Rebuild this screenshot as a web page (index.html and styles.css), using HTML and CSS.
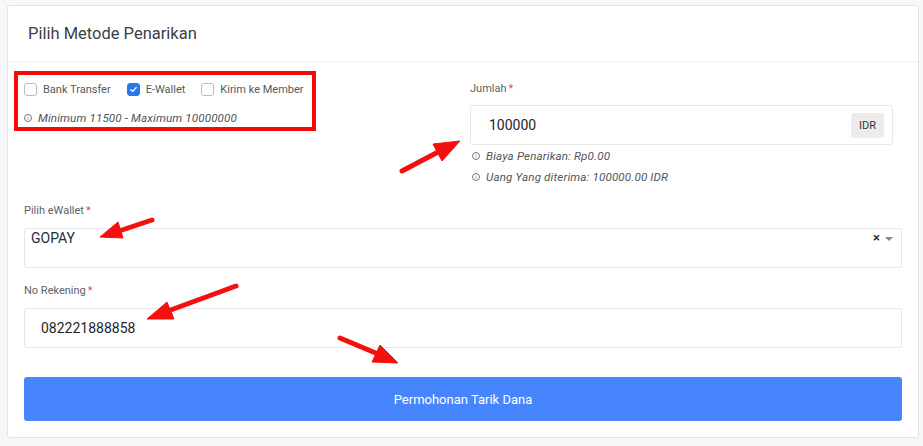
FILE: index.html
```html
<!DOCTYPE html>
<html lang="id">
<head>
<meta charset="utf-8">
<title>Pilih Metode Penarikan</title>
<link rel="stylesheet" href="styles.css">
</head>
<body>
<div class="card">
  <div class="card-header">Pilih Metode Penarikan</div>
  <div class="card-body">
    <div class="top-row">
      <div class="methods">
        <div class="checks">
          <label class="check"><span class="box"></span>Bank Transfer</label>
          <label class="check"><span class="box checked"><svg viewBox="0 0 12 12" width="9" height="9"><path d="M2.5 6.2 L5 8.5 L9.5 3.5" fill="none" stroke="#fff" stroke-width="1.8" stroke-linecap="round" stroke-linejoin="round"/></svg></span>E-Wallet</label>
          <label class="check"><span class="box"></span>Kirim ke Member</label>
        </div>
        <div class="hint"><span class="info-ic">i</span>Minimum 11500 - Maximum 10000000</div>
      </div>
      <div class="amount">
        <div class="label">Jumlah<span class="req">*</span></div>
        <div class="input amount-input">
          <span class="val">100000</span>
          <span class="addon">IDR</span>
        </div>
        <div class="hint hint-r"><span class="info-ic">i</span>Biaya Penarikan: Rp0.00</div>
        <div class="hint hint-r"><span class="info-ic">i</span>Uang Yang diterima: 100000.00 IDR</div>
      </div>
    </div>
    <div class="field">
      <div class="label">Pilih eWallet<span class="req">*</span></div>
      <div class="select">
        <span class="sel-val">GOPAY</span>
        <span class="sel-ctrl"><span class="clear">×</span><span class="caret"></span></span>
      </div>
    </div>
    <div class="field">
      <div class="label">No Rekening<span class="req">*</span></div>
      <div class="input rek-input"><span class="val">082221888858</span></div>
    </div>
    <button class="submit">Permohonan Tarik Dana</button>
  </div>
</div>
<svg class="arrows" width="923" height="446" viewBox="0 0 923 446">
  <g stroke="#f50f0f" stroke-width="5" stroke-linecap="round" fill="#f50f0f">
    <line x1="402" y1="171" x2="440" y2="151"/>
    <line x1="152" y1="220" x2="119" y2="231"/>
    <line x1="236" y1="286" x2="168" y2="311"/>
    <line x1="340" y1="338" x2="378" y2="354"/>
  </g>
  <g fill="#f50f0f" stroke="#f50f0f" stroke-width="1" stroke-linejoin="round">
    <polygon points="460,141 442,161 433,144"/>
    <polygon points="100,237 118,222 123,238"/>
    <polygon points="147,319 167,302 174,319"/>
    <polygon points="398,363 380,345 372,362"/>
  </g>
</svg>
</body>
</html>
```
FILE: styles.css
```css
* { box-sizing: border-box; }
html, body { margin: 0; padding: 0; }
body {
  background: #f6f7f9;
  font-family: Roboto, "Liberation Sans", sans-serif;
  color: #333;
  width: 923px;
  height: 446px;
  overflow: hidden;
  position: relative;
}
.card {
  margin: 5px 0 0 7px;
  width: 912px;
  height: 433px;
  background: #fff;
  border: 1px solid #e3e4e6;
  border-radius: 2px;
}
.card-header {
  height: 56px;
  padding: 0 20px;
  display: flex;
  align-items: center;
  font-size: 16.5px;
  color: #3a3f47;
  border-bottom: 1px solid #f1f1f2;
}
.card-body {
  padding: 9px 16px 16px 16px;
}
.top-row {
  display: grid;
  grid-template-columns: 431px 423px;
  column-gap: 15px;
}
.methods {
  margin-left: -10px;
  width: 302px;
  height: 60px;
  border: 4px solid #f40c0c;
  padding: 7px 6px 0 6px;
}
.checks {
  display: flex;
  align-items: center;
  height: 14px;
  gap: 16px;
}
.check {
  display: flex;
  align-items: center;
  gap: 6px;
  font-size: 11px;
  color: #555a62;
}
.box {
  width: 13px;
  height: 13px;
  border: 1px solid #b9bcc1;
  border-radius: 3px;
  background: #fff;
  display: flex;
  align-items: center;
  justify-content: center;
}
.box.checked {
  background: #2a78f0;
  border-color: #2a78f0;
}
.hint {
  display: flex;
  align-items: center;
  gap: 6px;
  font-size: 11.6px;
  letter-spacing: 0.15px;
  font-style: italic;
  color: #4f545b;
  margin-top: 15px;
  height: 14px;
}
.info-ic {
  width: 8px;
  height: 8px;
  border: 1px solid #777;
  border-radius: 50%;
  font-size: 6px;
  font-style: normal;
  line-height: 6px;
  text-align: center;
  color: #777;
  flex: none;
}
.amount { padding-top: 11px; }
.label {
  font-size: 11px;
  color: #5d6168;
  height: 14px;
  line-height: 14px;
}
.req { color: #e05252; margin-left: 2px; }
.input {
  border: 1px solid #e6e7e9;
  border-radius: 3px;
  height: 40px;
  display: flex;
  align-items: center;
  background: #fff;
}
.amount-input {
  margin-top: 9px;
  padding: 0 8px 0 18px;
  justify-content: space-between;
}
.val { font-size: 14px; color: #1f2329; }
.addon {
  background: #ececec;
  border-radius: 3px;
  width: 33px;
  height: 25px;
  display: flex;
  align-items: center;
  justify-content: center;
  font-size: 11px;
  color: #333;
}
.hint-r { margin-top: 4px; padding-left: 2px; height: 14px; }
.hint-r + .hint-r { margin-top: 7px; }
.field { margin-top: 16px; }
.top-row + .field { margin-top: 20px; }
.select {
  margin-top: 10px;
  height: 40px;
  border: 1px solid #e6e7e9;
  border-radius: 3px;
  display: flex;
  justify-content: space-between;
  padding: 1px 8px 0 6px;
}
.sel-val { font-size: 14px; color: #2a2e34; line-height: 16px; }
.sel-ctrl { display: flex; align-items: flex-start; gap: 5px; padding-top: 1px; }
.clear { font-size: 13px; font-weight: bold; color: #333; line-height: 14px; }
.caret {
  margin-top: 6px;
  width: 0; height: 0;
  border-left: 4px solid transparent;
  border-right: 4px solid transparent;
  border-top: 4px solid #888;
}
.rek-input { margin-top: 10px; padding-left: 16px; }
.submit {
  display: block;
  width: 100%;
  margin-top: 29px;
  height: 44px;
  border: 0;
  border-radius: 3px;
  background: #4785ff;
  color: #fff;
  font-family: Roboto, "Liberation Sans", sans-serif;
  font-size: 13px;
}
.arrows {
  position: absolute;
  left: 0;
  top: 0;
  pointer-events: none;
}
```
